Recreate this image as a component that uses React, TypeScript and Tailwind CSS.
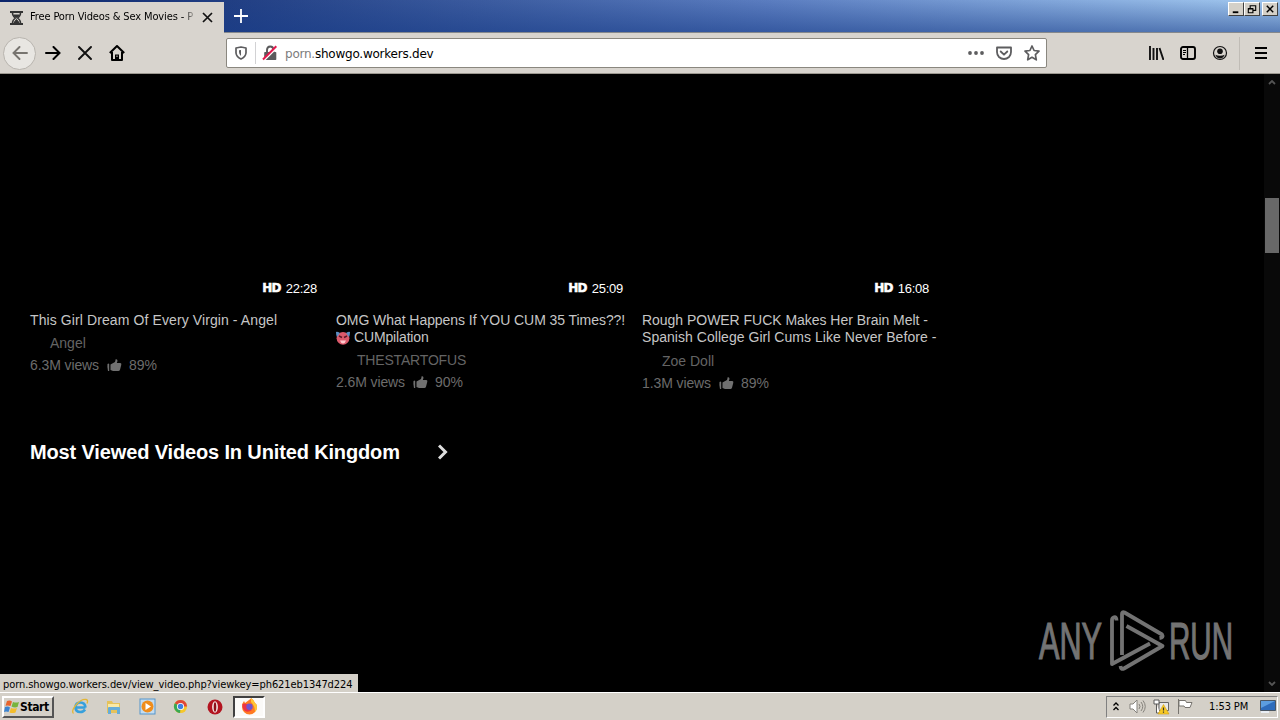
import type { ReactNode } from "react";

type Video = {
  title: { text: string; className: string; emoji?: boolean }[];
  duration: string;
  author: string;
  authorClass: string;
  views: string;
  rating: string;
};

const videos: Video[] = [
  {
    title: [{ text: "This Girl Dream Of Every Virgin - Angel", className: "tracking-[0.1px]" }],
    duration: "22:28",
    author: "Angel",
    authorClass: "pl-5 pt-[6px]",
    views: "6.3M views",
    rating: "89%",
  },
  {
    title: [
      { text: "OMG What Happens If YOU CUM 35 Times??!", className: "tracking-[-0.06px]" },
      { text: "CUMpilation", className: "tracking-[-0.15px]", emoji: true },
    ],
    duration: "25:09",
    author: "THESTARTOFUS",
    authorClass: "pl-[21px] pt-[6px] tracking-[-0.18px]",
    views: "2.6M views",
    rating: "90%",
  },
  {
    title: [
      { text: "Rough POWER FUCK Makes Her Brain Melt -", className: "tracking-[-0.03px]" },
      { text: "Spanish College Girl Cums Like Never Before -", className: "tracking-[0.04px]" },
    ],
    duration: "16:08",
    author: "Zoe Doll",
    authorClass: "pl-5 pt-[7px]",
    views: "1.3M views",
    rating: "89%",
  },
];

function DevilFace() {
  return (
    <svg width="14" height="14" viewBox="0 0 14 14">
      <circle cx="7" cy="7.3" r="6.4" fill="#dc5a6c" />
      <path d="M0 1q1-1 4 1L1 6Q0 4 0 1z" fill="#5b8fc4" />
      <path d="M14 1q-1-1-4 1l3 4q1-2 1-5z" fill="#5b8fc4" />
      <path d="M3 5l3 1.500M11 5L8 6.500" stroke="#5c1626" strokeWidth="1.500" />
      <path d="M4 9.500h6q-1 3-3 3t-3-3z" fill="#ffc9cd" />
    </svg>
  );
}

function ThumbUp() {
  return (
    <svg width="15" height="13" viewBox="0 0 15 13" fill="#707070">
      <path d="M.5 5q1.200-1 1.700 0v7H1Q0 8 .5 5z" />
      <path d="M3.500 5.500L8 3l.8-3q2 .3 1.700 2L9.800 4h3.400q1.500.3 1.100 1.800l-1.300 5Q12.600 12 11.300 12H6L3.500 11z" />
    </svg>
  );
}

function VideoCard({ video }: { video: Video }) {
  return (
    <div className="w-[296px] whitespace-nowrap text-[14px] leading-[17px]">
      <div className="flex h-[238px] items-end justify-end gap-[5px] pr-[9px] pb-[15px] text-white">
        <span className="font-['DejaVu_Sans',sans-serif] text-[12px] font-bold tracking-[-0.8px] [-webkit-text-stroke:0.5px_white]">
          HD
        </span>
        <span className="text-[13px] leading-[17px] tracking-[-0.25px]">{video.duration}</span>
      </div>
      <div className="text-[#c6c6c6]">
        {video.title.map((line) => (
          <div key={line.text} className={`flex items-center gap-1 ${line.className}`}>
            {line.emoji && <DevilFace />}
            {line.text}
          </div>
        ))}
      </div>
      <div className={`text-[#646464] ${video.authorClass}`}>{video.author}</div>
      <div className="flex items-center pt-[5px] text-[#6c6c6c]">
        <span className="w-[77px] tracking-[-0.1px]">{video.views}</span>
        <ThumbUp />
        <span className="ml-[7px]">{video.rating}</span>
      </div>
    </div>
  );
}

function TitleBar() {
  return (
    <div className="flex h-[33px] bg-linear-to-r from-[#0b246a] via-[#5b7dc0] via-60% to-[#a4caf0]">
      <div className="flex w-full bg-linear-to-b from-transparent to-[#183c8790]">
        <div className="mt-[2px] flex h-[31px] w-[224px] items-center bg-[#d8d4ce] pl-[10px]">
          <svg width="13" height="14" viewBox="0 0 13 14" fill="none" stroke="#333">
            <path d="M0 1h13M0 13h13" strokeWidth="2" />
            <path d="M2.500 2q0 3 3 5-3 2-3 5M10.500 2q0 3-3 5 3 2 3 5" strokeWidth="1.500" />
            <path d="M4 4h5L6.500 6.500zM4 11.500l2.500-3 2.500 3z" fill="#333" />
          </svg>
          <span className="ml-[7px] w-[167px] bg-linear-to-r from-black from-92% to-transparent bg-clip-text font-['DejaVu_Sans_Condensed','DejaVu_Sans',sans-serif] text-[11px] tracking-[-0.13px] whitespace-nowrap text-transparent">
            Free Porn Videos &amp; Sex Movies - P
          </span>
          <svg width="11" height="11" viewBox="0 0 11 11" className="ml-[5px]" stroke="#111" strokeWidth="1.700">
            <path d="M1 1l9 9M10 1l-9 9" />
          </svg>
        </div>
        <div className="flex flex-1 border-b border-[#85888c]">
          <svg width="14" height="14" viewBox="0 0 14 14" className="mt-[9px] ml-[10px]" stroke="#fff" strokeWidth="1.800">
            <path d="M7 0v14M0 7h14" />
          </svg>
          <div className="mt-[2px] ml-auto flex pr-[2px]">
            <WindowButton>
              <path d="M4 10h6" strokeWidth="2" />
            </WindowButton>
            <WindowButton>
              <path d="M5.500 6V3h6v5H9M5 3h7M3.500 6.500h5v4h-5zM3 6h6" strokeWidth="1.200" />
            </WindowButton>
            <div className="w-[2px]" />
            <WindowButton>
              <path d="M4 3l7 7M11 3l-7 7" strokeWidth="1.600" />
            </WindowButton>
          </div>
        </div>
      </div>
    </div>
  );
}

function WindowButton({ children }: { children: ReactNode }) {
  return (
    <div className="h-[14px] w-4 border border-t-white border-r-[#404040] border-b-[#404040] border-l-white bg-[#d4d0c8]">
      <svg width="14" height="12" viewBox="0 0 15 13" fill="none" stroke="#000">
        {children}
      </svg>
    </div>
  );
}

function NavBar() {
  return (
    <div className="flex h-[41px] items-center border-b border-[#9c9890] bg-[#d8d4ce] pl-[3px]">
      <div className="flex size-[33px] items-center justify-center rounded-full border border-[#b8b4ae] bg-[#e8e6e2]">
        <svg width="16" height="14" viewBox="0 0 16 14" fill="none" stroke="#77746f" strokeWidth="1.900" strokeLinecap="round">
          <path d="M15 7H1.500M7.500 1l-6 6 6 6" />
        </svg>
      </div>
      <svg width="16" height="14" viewBox="0 0 16 14" className="ml-[9px]" fill="none" stroke="#000" strokeWidth="2" strokeLinecap="round">
        <path d="M1 7h13.500M8.500 1l6 6-6 6" />
      </svg>
      <svg width="14" height="14" viewBox="0 0 14 14" className="ml-[17px]" stroke="#111" strokeWidth="1.900" strokeLinecap="round">
        <path d="M1 1l12 12M13 1L1 13" />
      </svg>
      <svg width="16" height="16" viewBox="0 0 16 16" className="ml-[17px]" fill="none" stroke="#000" strokeWidth="2">
        <path d="M.8 8L8 1l7.200 7M3 7v8h10V7" strokeLinejoin="round" />
        <path d="M6 14v-4.500h4V14z" fill="#000" strokeWidth="0" />
        <path d="M8 10.500v1.500" stroke="#d8d4ce" strokeWidth="1" />
      </svg>

      <div className="ml-[101px] flex h-[30px] w-[821px] items-center rounded-[2px] border border-[#8a877f] bg-white pl-2">
        <svg width="12" height="14" viewBox="0 0 12 14" fill="none" stroke="#5d5d5f">
          <path d="M1 2l5-1 5 1v5q-.5 4-5 6-4.500-2-5-6z" strokeWidth="1.700" strokeLinejoin="round" />
          <path d="M6 4v6q-2-1.500-2-4V4.300z" fill="#5d5d5f" stroke="none" />
        </svg>
        <div className="ml-2 h-[22px] w-px bg-[#d2d2d4]" />
        <svg width="16" height="16" viewBox="0 0 16 16" className="ml-[6px]" fill="none">
          <path d="M5 7V5q0-3.500 3.200-3.500T11.400 5v2" stroke="#5a5a5c" strokeWidth="1.900" />
          <path d="M3 7h10.500q.8 0 .8.8v6.500q0 .8-.8.8H3q-.8 0-.8-.8V7.800Q2.200 7 3 7z" fill="#5a5a5c" />
          <path d="M1.800 15.500L15.300 2" stroke="#fff" strokeWidth="2" />
          <path d="M1 14.500L14.300 1.200" stroke="#e2194d" strokeWidth="2" />
        </svg>
        <span className="ml-[7px] pt-px font-['DejaVu_Sans',sans-serif] text-[12px] tracking-[-0.23px] text-black">
          <span className="text-[#7c7c7c]">porn.</span>showgo.workers.dev
        </span>
        <div className="mr-[6px] ml-auto flex items-center gap-3">
          <svg width="16" height="4" viewBox="0 0 16 4" fill="#5d5d5f">
            <circle cx="2" cy="2" r="1.900" />
            <circle cx="8" cy="2" r="1.900" />
            <circle cx="14" cy="2" r="1.900" />
          </svg>
          <svg width="16" height="14" viewBox="0 0 16 14" fill="none" stroke="#5d5d5f" strokeWidth="1.800" strokeLinejoin="round" strokeLinecap="round">
            <path d="M1 1.500h14V6q0 3-2 5-2.200 2-5 2t-5-2Q1 9 1 6z" />
            <path d="M4.700 5.500L8 8.700l3.300-3.200" />
          </svg>
          <svg width="16" height="16" viewBox="0 0 16 16" fill="none" stroke="#5d5d5f" strokeWidth="1.700" strokeLinejoin="round">
            <path d="M8 1l2.100 4.500 4.900.6-3.600 3.500.9 5.200L8 12.300l-4.300 2.500.9-5.200L1 6.100l4.900-.6z" />
          </svg>
        </div>
      </div>

      <div className="ml-auto flex h-full items-center pr-[13px]">
        <svg width="16" height="14" viewBox="0 0 16 14" stroke="#111" strokeWidth="1.900">
          <path d="M2 0v14M5.500 2v12M9 2v12M11.500 2l4 12" />
        </svg>
        <svg width="16" height="14" viewBox="0 0 16 14" className="ml-4" fill="none" stroke="#000">
          <rect x="1" y="1" width="14" height="12" rx="2" strokeWidth="1.900" />
          <path d="M7.500 1v12" strokeWidth="1.300" />
          <path d="M3 4.500h3M3 6.500h3M3 8.500h2" />
        </svg>
        <svg width="16" height="16" viewBox="0 0 16 16" className="ml-4">
          <circle cx="8" cy="8" r="6.500" fill="none" stroke="#111" strokeWidth="1.200" />
          <circle cx="8" cy="6.300" r="2.800" fill="#111" />
          <path d="M3.300 9.800q2 1 4.700 1t4.700-1q-1.300 3.700-4.700 3.700T3.300 9.800z" fill="#111" />
        </svg>
        <div className="ml-[11px] h-[33px] w-px bg-[#c0bcb6]" />
        <svg width="12" height="12" viewBox="0 0 12 12" className="ml-[15px]" stroke="#000" strokeWidth="2">
          <path d="M0 1h12M0 6h12M0 11h12" />
        </svg>
      </div>
    </div>
  );
}

function Watermark() {
  return (
    <svg width="200" height="70" viewBox="0 0 200 70" className="absolute right-[41px] bottom-[13px] overflow-visible">
      <g
        fill="#737373"
        stroke="#737373"
        strokeWidth="1.200"
        fontFamily="'Liberation Sans Narrow', 'Liberation Sans', sans-serif"
        fontSize="51"
      >
        <text x="0" y="49.500" textLength="63" lengthAdjust="spacingAndGlyphs">ANY</text>
        <text x="130" y="49.500" textLength="64" lengthAdjust="spacingAndGlyphs">RUN</text>
      </g>
      <g fill="none" stroke="#737373" strokeWidth="3.800" strokeLinejoin="round">
        <path d="M77.500 11.500q0-4.500-3-3-1.500.5-1.500 3v43.500l38-20.500" />
        <path d="M83 46V5q0-2.500 2.500-1.500l37.500 22q2 3-2.500 3.500" />
        <path d="M87.500 17l36 20L85 59.500q-3 1.500-3.500-2.500" />
      </g>
    </svg>
  );
}

function Content() {
  return (
    <div className="relative flex h-[618px] bg-black font-['Liberation_Sans',Arial,sans-serif]">
      <div className="flex-1 pl-[30px]">
        <div className="flex h-[365px] gap-[10px]">
          {videos.map((v) => (
            <VideoCard key={v.duration} video={v} />
          ))}
        </div>
        <div className="flex items-center">
          <h2 className="w-[408px] text-[20px] leading-[26px] font-bold tracking-[-0.14px] text-white">
            Most Viewed Videos In United Kingdom
          </h2>
          <svg width="10" height="16" viewBox="0 0 10 16" fill="none" stroke="#ddd" strokeWidth="3">
            <path d="M1 1.500L7.500 8 1 14.500" />
          </svg>
        </div>
      </div>
      <div className="flex w-4 flex-col items-center bg-[#090909]">
        <svg width="8" height="5" viewBox="0 0 8 5" className="mt-[6px]" fill="none" stroke="#555" strokeWidth="1.800">
          <path d="M1 4l3-3 3 3" />
        </svg>
        <div className="mt-[113px] h-[55px] w-[14px] bg-[#686868]" />
        <svg width="8" height="5" viewBox="0 0 8 5" className="mt-auto mb-[6px]" fill="none" stroke="#555" strokeWidth="1.800">
          <path d="M1 1l3 3 3-3" />
        </svg>
      </div>
      <Watermark />
      <div className="absolute bottom-0 left-0 h-[18px] w-[358px] bg-[#d4d0c8] pl-[3px] font-['DejaVu_Sans_Condensed','DejaVu_Sans',sans-serif] text-[11px] leading-[21px] tracking-[-0.08px] whitespace-nowrap">
        porn.showgo.workers.dev/view_video.php?viewkey=ph621eb1347d224
      </div>
    </div>
  );
}

function TaskBar() {
  return (
    <div className="flex h-7 items-center border-t border-[#fff] bg-[#d4d0c8] pl-[2px]">
      <div className="flex h-[22px] w-[52px] items-center border-2 border-t-white border-r-[#555] border-b-[#555] border-l-white font-['DejaVu_Sans_Condensed','DejaVu_Sans',sans-serif] text-[12px] font-bold tracking-[-0.4px]">
        <svg width="16" height="14" viewBox="0 0 16 14" className="shrink-0">
          <path d="M3 1q3-1 5 .5L6.500 6q-2-1-5-.3z" fill="#e8642c" />
          <path d="M9 2q3 1 6 0l-1.500 5q-3 1-6-.5z" fill="#78b43c" />
          <path d="M1 7q3-1 5 .5L4.500 12Q2 11 0 12z" fill="#3b83d0" />
          <path d="M7 8q3 1 6 0l-1.500 4.500q-3 1-6 0z" fill="#f4bd2c" />
        </svg>
        <span>Start</span>
      </div>

      <svg width="18" height="18" viewBox="0 0 18 18" className="ml-[17px]" fill="none">
        <path d="M14.500 9.500h-10q0-5 4.800-5t5.200 5M4.500 9q0 5 4.800 5 3.200 0 4.700-2.500" stroke="#36a0dc" strokeWidth="2.600" />
        <path d="M2.500 15.500Q0 13 5 7t10-5.500q2.500.5 1 4" stroke="#e3b636" strokeWidth="1.300" />
      </svg>
      <svg width="17" height="17" viewBox="0 0 17 17" className="ml-4">
        <path d="M2 3h5l1 2h7v10H2z" fill="#e5c25b" />
        <path d="M3 6h11v4H3z" fill="#f9e9a6" />
        <path d="M3 16v-6q0-1 1-1h10q1 0 1 1v6h-3v-4H6v4z" fill="#66acd8" />
      </svg>
      <svg width="17" height="17" viewBox="0 0 17 17" className="ml-[17px]">
        <rect x="1" y="1" width="15" height="15" fill="#c4dcf0" stroke="#5596cc" />
        <circle cx="8.500" cy="8.500" r="6" fill="#ef8d1c" />
        <path d="M6.500 5l5.500 3.500L6.500 12z" fill="#fff" />
      </svg>
      <svg width="15" height="15" viewBox="0 0 16 16" className="ml-[17px]">
        <circle cx="8" cy="8" r="7" fill="#f6c72a" />
        <path d="M8 8L1.900 4.500A7 7 0 0 1 14.100 4.500L15 8z" fill="#de4638" />
        <path d="M8 8L1.900 4.500A7 7 0 0 0 7.500 15z" fill="#38a854" />
        <circle cx="8" cy="8" r="3.800" fill="#fff" />
        <circle cx="8" cy="8" r="2.900" fill="#3e80e2" />
      </svg>
      <svg width="16" height="16" viewBox="0 0 16 16" className="ml-[19px]">
        <circle cx="8" cy="8" r="7.500" fill="#b31420" />
        <ellipse cx="8" cy="8" rx="2.900" ry="5.700" fill="#f4e7e4" />
        <ellipse cx="8" cy="8" rx="1.300" ry="4.700" fill="#8e1019" />
      </svg>
      <div className="ml-[10px] flex h-[22px] w-8 items-center justify-center border-2 border-t-[#404040] border-r-white border-b-white border-l-[#404040] bg-[#fbfaf8]">
        <svg width="17" height="17" viewBox="0 0 17 17">
          <path d="M8 2q2-1 2-2 3 2 4 5 2 1 2 4a7.500 7.500 0 0 1-15 0q0-4 2-6l1 2z" fill="#ff7a22" />
          <path d="M10 0q3 2 4 5 2 1 2 4 0 3-2 5 0-6-4-10z" fill="#ffc734" />
          <path d="M1.500 6q2-1 4 0L9 8l-3 2 5 2q-4 3-7 1T1.500 6z" fill="#ed3345" />
          <circle cx="8.500" cy="8.800" r="3.200" fill="#7153ce" />
        </svg>
      </div>

      <div className="mr-[2px] ml-auto flex h-[22px] w-[172px] items-center border border-t-[#808080] border-r-white border-b-white border-l-[#808080] pl-[6px]">
        <svg width="6" height="9" viewBox="0 0 6 9" fill="none" stroke="#000" strokeWidth="1.300">
          <path d="M.5 3.500L3 1l2.500 2.500M.5 8L3 5.500 5.500 8" />
        </svg>
        <svg width="17" height="15" viewBox="0 0 17 15" className="ml-[10px]" fill="none" stroke="#85827c">
          <path d="M1 5h3l4-4v13l-4-4H1z" fill="#fff" />
          <path d="M10 5q2 2.500 0 5M12 3q3.500 4.500 0 9M14 1.500q4.500 6 0 12" />
        </svg>
        <svg width="17" height="16" viewBox="0 0 17 16" className="ml-[7px]">
          <path d="M6 3.500h9.500v8H6z" fill="#e8e8e8" stroke="#676767" />
          <path d="M1 1h5v4H1zM3.500 5v9H7" fill="#fff" stroke="#5a5a5a" />
          <path d="M10.500 5.500L16 15H5z" fill="#f8ca25" stroke="#d19f10" strokeWidth=".6" />
          <path d="M10.500 8.500v3M10.500 12.500v1.200" stroke="#333" strokeWidth="1.200" />
        </svg>
        <svg width="17" height="15" viewBox="0 0 17 15" className="ml-[7px]" fill="#fff" stroke="#77746f">
          <path d="M1.500 0v15M2 1.500h6.500l1 2H15l-2 5H8L7 7H2z" />
        </svg>
        <span className="ml-[15px] w-[42px] pt-px font-['DejaVu_Sans_Condensed','DejaVu_Sans',sans-serif] text-[11px] tracking-[-0.1px] whitespace-nowrap">
          1:53 PM
        </span>
        <svg width="16" height="13" viewBox="0 0 16 13" className="ml-[9px] shrink-0">
          <path d="M.5.500h15v10H.5z" fill="#2e6cbb" stroke="#4a5663" />
          <path d="M1 1h14L1 8z" fill="#5c9ee0" />
          <path d="M1 12h8" stroke="#e9eef4" strokeWidth="2" />
        </svg>
      </div>
    </div>
  );
}

export default function App() {
  return (
    <div className="flex h-[720px] w-[1280px] flex-col overflow-hidden bg-black text-black">
      <TitleBar />
      <NavBar />
      <Content />
      <TaskBar />
    </div>
  );
}
